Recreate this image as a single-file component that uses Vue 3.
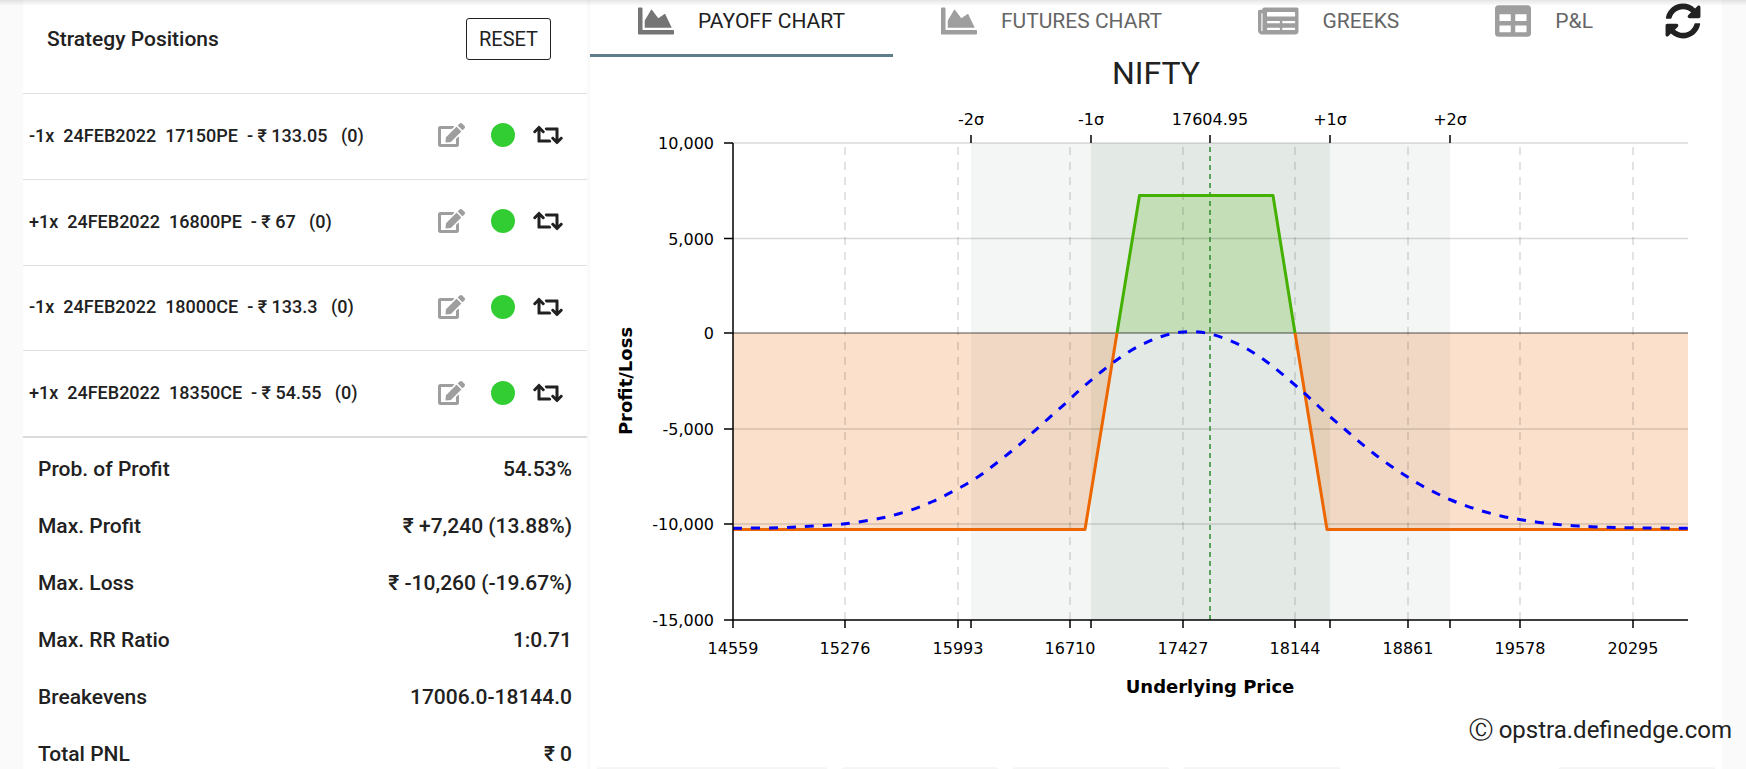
<script setup>
import { ref } from 'vue'

const positions = [
  { qty: '-1x', contract: '17150PE', price: '133.05' },
  { qty: '+1x', contract: '16800PE', price: '67' },
  { qty: '-1x', contract: '18000CE', price: '133.3' },
  { qty: '+1x', contract: '18350CE', price: '54.55' },
]

const stats = [
  ['Prob. of Profit', '54.53%'],
  ['Max. Profit', '₹ +7,240 (13.88%)'],
  ['Max. Loss', '₹ -10,260 (-19.67%)'],
  ['Max. RR Ratio', '1:0.71'],
  ['Breakevens', '17006.0-18144.0'],
  ['Total PNL', '₹ 0'],
]

const icons = {
  area: { w: 512, d: 'M500 384c6.6 0 12 5.4 12 12v40c0 6.6-5.4 12-12 12H12c-6.6 0-12-5.4-12-12V76c0-6.6 5.4-12 12-12h40c6.6 0 12 5.4 12 12v308h436zM372.7 159.5L288 216l-85.3-113.7c-5.1-6.8-15.5-6.3-19.9 1L96 248v104h384l-89.9-187.8c-3.2-6.5-11.4-8.7-17.4-4.7z' },
  news: { w: 576, d: 'M552 64H88c-13.3 0-24 10.7-24 24v8H24c-13.3 0-24 10.7-24 24v272c0 30.9 25.1 56 56 56h472c26.5 0 48-21.5 48-48V88c0-13.3-10.7-24-24-24zM56 400a8 8 0 0 1-8-8V144h16v248a8 8 0 0 1-8 8zM140 128h376q12 0 12 12v40q0 12-12 12H140q-12 0-12-12v-40q0-12 12-12zM140 256h160q12 0 12 12v8q0 12-12 12H140q-12 0-12-12v-8q0-12 12-12zM356 256h160q12 0 12 12v8q0 12-12 12H356q-12 0-12-12v-8q0-12 12-12zM140 352h160q12 0 12 12v8q0 12-12 12H140q-12 0-12-12v-8q0-12 12-12zM356 352h160q12 0 12 12v8q0 12-12 12H356q-12 0-12-12v-8q0-12 12-12z' },
  table: { w: 512, d: 'M464 32H48C21.5 32 0 53.5 0 80v352c0 26.5 21.5 48 48 48h416c26.5 0 48-21.5 48-48V80c0-26.5-21.5-48-48-48zM224 416H64v-96h160v96zm0-160H64v-96h160v96zm224 160H288v-96h160v96zm0-160H288v-96h160v96z' },
}

const tabs = [
  { label: 'PAYOFF CHART', icon: icons.area },
  { label: 'FUTURES CHART', icon: icons.area },
  { label: 'GREEKS', icon: icons.news },
  { label: 'P&L', icon: icons.table },
]
const active = ref(0)

const xTicks = [14559, 15276, 15993, 16710, 17427, 18144, 18861, 19578, 20295].map((v, i) => ({
  label: v,
  x: Math.floor(733 + i * 112.5),
}))
const yTicks = [
  { label: '10,000', y: 143 },
  { label: '5,000', y: 238.5 },
  { label: '0', y: 333 },
  { label: '-5,000', y: 429 },
  { label: '-10,000', y: 524 },
  { label: '-15,000', y: 620 },
]
const sigmas = [
  { label: '-2σ', x: 971 },
  { label: '-1σ', x: 1091 },
  { label: '17604.95', x: 1210 },
  { label: '+1σ', x: 1330 },
  { label: '+2σ', x: 1450 },
]

const curve = [
  [733, 528.3], [777.6, 527.7], [809, 526.3], [845.3, 523.7], [880, 518.3], [898, 514], [916, 508.3],
  [932.6, 501.5], [948.5, 493.7], [964.4, 485.2], [979.6, 475.8], [994, 465], [1008, 454], [1021, 443.3],
  [1032, 433.2], [1043, 423.3], [1054.8, 412.8], [1065.6, 403.2], [1076.5, 392.9], [1088, 382.8],
  [1101, 372], [1115, 361.2], [1129.8, 351.2], [1146, 342.6], [1162.4, 336.2], [1180, 332.2], [1198.5, 332],
  [1215.7, 335.4], [1233, 341.8], [1249, 350], [1264, 359.7], [1277.7, 370.3], [1291.5, 382], [1303, 392],
  [1314, 402], [1325, 412.3], [1337, 422.6], [1348, 432], [1360, 442.3], [1373.8, 453.5], [1388.3, 464.2],
  [1403.6, 474.4], [1418.6, 483.8], [1434.7, 492.4], [1451, 500], [1467.5, 506.3], [1484.7, 511.7],
  [1502, 516.2], [1519.5, 519.5], [1537.4, 522.2], [1555.4, 524.3], [1573, 525.7], [1591.6, 526.7],
  [1627, 527.7], [1688, 528.3],
]

// Catmull-Rom spline through the sampled points, emitted as cubic segments.
const curvePath = curve.reduce((path, p, i) => {
  if (i === 0) return `M${p}`
  const a = curve[i - 2] || curve[i - 1]
  const b = curve[i - 1]
  const n = curve[i + 1] || p
  const c1 = [b[0] + (p[0] - a[0]) / 6, b[1] + (p[1] - a[1]) / 6]
  const c2 = [p[0] - (n[0] - b[0]) / 6, p[1] - (n[1] - b[1]) / 6]
  return `${path}C${c1} ${c2} ${p}`
}, '')
</script>

<template>
  <div class="page">
    <section class="positions">
      <header class="head">
        <h1>Strategy Positions</h1>
        <button class="reset" type="button">RESET</button>
      </header>
      <ul class="legs">
        <li v-for="p in positions" :key="p.contract">
          <span class="leg">{{ p.qty }}&nbsp; 24FEB2022&nbsp; {{ p.contract }}&nbsp; - ₹ {{ p.price }} &nbsp;&nbsp;<span class="count">(0)</span></span>
          <button class="edit" type="button" aria-label="Edit position">
            <svg viewBox="0 0 576 512" width="27" height="24"><path d="M402.6 83.2l90.2 90.2c3.8 3.8 3.8 10 0 13.8L274.4 405.6l-92.8 10.3c-12.4 1.4-22.9-9.1-21.5-21.5l10.3-92.8L388.8 83.2c3.8-3.8 10-3.8 13.8 0zm162-22.9l-48.8-48.8c-15.2-15.2-39.9-15.2-55.2 0l-35.4 35.4c-3.8 3.8-3.8 10 0 13.8l90.2 90.2c3.8 3.8 10 3.8 13.8 0l35.4-35.4c15.2-15.3 15.2-40 0-55.2zM384 346.2V448H64V128h229.8c3.2 0 6.2-1.3 8.5-3.5l40-40c7.6-7.6 2.2-20.5-8.5-20.5H48C21.5 64 0 85.5 0 112v352c0 26.5 21.5 48 48 48h352c26.5 0 48-21.5 48-48V306.2c0-10.7-12.9-16-20.5-8.5l-40 40c-2.2 2.3-3.5 5.3-3.5 8.5z" /></svg>
          </button>
          <button class="dot" type="button" aria-label="Toggle position"></button>
          <button class="swap" type="button" aria-label="Reverse position">
            <svg viewBox="0 0 640 512" width="30" height="24"><path d="M629.657 343.598L528.971 444.284c-9.373 9.372-24.568 9.372-33.941 0L394.343 343.598c-9.373-9.373-9.373-24.569 0-33.941l10.823-10.823c9.562-9.562 25.133-9.34 34.419.492L480 342.118V160H292.451a24.005 24.005 0 0 1-16.971-7.029l-16-16C244.361 121.851 255.069 96 276.451 96H520c13.255 0 24 10.745 24 24v222.118l40.416-42.792c9.285-9.831 24.856-10.054 34.419-.492l10.823 10.823c9.372 9.372 9.372 24.569-.001 33.941zm-265.138 15.431A23.999 23.999 0 0 0 347.548 352H160V169.881l40.416 42.792c9.286 9.831 24.856 10.054 34.419.491l10.822-10.822c9.373-9.373 9.373-24.569 0-33.941L144.971 67.716c-9.373-9.373-24.569-9.373-33.941 0L10.343 168.402c-9.373 9.373-9.373 24.569 0 33.941l10.822 10.822c9.562 9.562 25.133 9.34 34.419-.491L96 169.881V392c0 13.255 10.745 24 24 24h243.549c21.382 0 32.09-25.851 16.971-40.971l-16.001-16z" /></svg>
          </button>
        </li>
      </ul>
      <dl class="stats">
        <div v-for="[k, v] in stats" :key="k"><dt>{{ k }}</dt><dd>{{ v }}</dd></div>
      </dl>
    </section>

    <main class="chart">
      <nav class="tabs">
        <button v-for="(t, i) in tabs" :key="t.label" type="button" class="tab" :class="{ active: active === i }" @click="active = i">
          <svg :viewBox="`0 0 ${t.icon.w} 512`" height="36"><path :d="t.icon.d" fill-rule="evenodd" /></svg>
          <span>{{ t.label }}</span>
        </button>
        <button class="refresh" type="button" aria-label="Refresh">
          <svg viewBox="0 0 512 512" width="36" height="36"><path d="M370.72 133.28C339.458 104.008 298.888 87.962 255.848 88c-77.458.068-144.328 53.178-162.791 126.85-1.344 5.363-6.122 9.15-11.651 9.15H24.103c-7.498 0-13.194-6.807-11.807-14.176C33.933 94.924 134.813 8 256 8c66.448 0 126.791 26.136 171.315 68.685L463.03 40.97C478.149 25.851 504 36.559 504 57.941V192c0 13.255-10.745 24-24 24H345.941c-21.382 0-32.09-25.851-16.971-40.971l41.75-41.749zM32 296h134.059c21.382 0 32.09 25.851 16.971 40.971l-41.75 41.75c31.262 29.273 71.835 45.319 114.876 45.28 77.418-.07 144.315-53.144 162.787-126.849 1.344-5.363 6.122-9.15 11.651-9.15h57.304c7.498 0 13.194 6.807 11.807 14.176C478.067 417.076 377.187 504 256 504c-66.448 0-126.791-26.136-171.315-68.685L48.97 471.03C33.851 486.149 8 475.441 8 454.059V320c0-13.255 10.745-24 24-24z" /></svg>
        </button>
      </nav>
      <h2>NIFTY</h2>
      <svg class="plot" viewBox="590 93 1132 614" role="img" aria-label="NIFTY payoff chart">
        <rect x="971" y="143" width="479" height="477" fill="#f3f6f5" />
        <rect x="1091" y="143" width="239" height="477" fill="#e3eae6" />
        <path class="loss-area" d="M733 333H1117L1085 529H733zM1295 333H1688V529H1327z" />
        <path class="gain-area" d="M1117 333L1139.500 195.500H1273L1295 333z" />
        <g class="grid">
          <line v-for="t in yTicks.slice(0, 5)" :key="t.y" x1="733" x2="1688" :y1="t.y" :y2="t.y" :class="{ zero: t.label === '0' }" />
          <line v-for="t in xTicks.slice(1)" :key="t.x" :x1="t.x" :x2="t.x" y1="620" y2="143" stroke-dasharray="8 7" />
        </g>
        <line class="spot" x1="1210" x2="1210" y1="620" y2="143" />
        <path class="line loss" d="M733 529.500H1085L1117 333M1295 333L1327 529.500H1688" />
        <path class="line gain" d="M1117 333L1139.500 195.500H1273L1295 333" />
        <path class="today" :d="curvePath" />
        <g class="axis">
          <path d="M733 143V620H1688" />
          <line v-for="t in yTicks" :key="t.y" x1="724" x2="733" :y1="t.y" :y2="t.y" />
          <line v-for="t in xTicks" :key="t.x" :x1="t.x" :x2="t.x" y1="620" y2="628" />
          <template v-for="s in sigmas" :key="s.x">
            <line :x1="s.x" :x2="s.x" y1="135" y2="143" />
            <line v-if="s.x !== 1210" :x1="s.x" :x2="s.x" y1="620" y2="628" />
          </template>
        </g>
        <g class="labels">
          <text v-for="t in yTicks" :key="t.label" x="714" :y="t.y + 6" text-anchor="end">{{ t.label }}</text>
          <text v-for="t in xTicks" :key="t.label" :x="t.x" y="654" text-anchor="middle">{{ t.label }}</text>
          <text v-for="s in sigmas" :key="s.label" :x="s.x" y="125" text-anchor="middle">{{ s.label }}</text>
          <text class="title" x="1210" y="693" text-anchor="middle">Underlying Price</text>
          <text class="title" transform="translate(632 381) rotate(-90)" text-anchor="middle">Profit/Loss</text>
        </g>
      </svg>
      <div class="cards"><i class="wide"></i><i></i><i></i><i></i><i class="last"></i></div>
    </main>

    <div class="credit"><span class="mark">Ⓒ</span> opstra.definedge.com</div>
    <div class="shade"></div>
  </div>
</template>

<style>
body {
  margin: 0;
  background: #fafafa;
}
</style>

<style scoped>
.page {
  position: relative;
  display: grid;
  grid-template-columns: minmax(0, 564fr) minmax(0, 1132fr);
  gap: 3px;
  height: 100vh;
  padding: 0 24px 0 23px;
  box-sizing: border-box;
  overflow: hidden;
  background: #fafafa;
  color: #212121;
  font-family: Roboto, "Noto Sans", sans-serif;
}
button {
  margin: 0;
  padding: 0;
  border: 0;
  background: none;
  color: inherit;
  font: inherit;
  cursor: pointer;
}
svg {
  display: block;
  fill: currentColor;
}
h1, h2, ul, dl, dd {
  margin: 0;
  padding: 0;
}
.positions, .chart {
  background: #fff;
}
.head {
  display: flex;
  align-items: center;
  justify-content: space-between;
  padding: 18px 36px 33px 24px;
}
h1 {
  font-size: 21px;
  font-weight: 500;
  line-height: 24px;
}
.reset {
  height: 42px;
  padding: 0 12px;
  border: 1px solid #212121;
  border-radius: 3px;
  font-size: 20px;
}
.legs {
  display: grid;
  grid-auto-rows: 1fr;
  height: 343px;
  list-style: none;
  border-bottom: 2px solid #dcdcdc;
}
.legs li {
  display: flex;
  align-items: center;
  padding: 0 24px 2px 6px;
  border-top: 1px solid #e0e0e0;
}
.leg {
  flex: 1;
  font-size: 18px;
  font-weight: 500;
  white-space: pre;
}
.edit {
  color: #9e9e9e;
}
.dot {
  width: 24px;
  height: 24px;
  margin: 0 18px 0 26px;
  border-radius: 50%;
  background: #32cd32;
}
.stats {
  padding-top: 2px;
}
.stats div {
  display: flex;
  align-items: center;
  justify-content: space-between;
  height: 57px;
  padding: 0 15px;
  font-size: 21px;
  font-weight: 500;
}
.tabs {
  display: flex;
  align-items: flex-start;
}
.tab {
  display: flex;
  align-items: center;
  gap: 24px;
  padding: 3px 48px 15px;
  border-bottom: 3px solid transparent;
  color: #666;
  font-size: 21px;
  white-space: nowrap;
}
.tab svg {
  color: #9e9e9e;
}
.tab.active {
  border-color: #607d8b;
  color: #212121;
}
.tab.active svg {
  color: #757575;
}
.refresh {
  margin: 3px 21px 0 auto;
}
h2 {
  padding-bottom: 4px;
  font-size: 32px;
  font-weight: 400;
  line-height: 32px;
  text-align: center;
}
.plot {
  width: 100%;
}
.loss-area {
  fill: rgba(236, 102, 0, 0.2);
}
.gain-area {
  fill: rgba(75, 180, 0, 0.2);
}
.grid line {
  stroke: #000;
  stroke-opacity: 0.15;
  stroke-width: 1.5;
}
.grid .zero {
  stroke-opacity: 0.45;
}
.spot {
  stroke: #2e8b2e;
  stroke-width: 1.5;
  stroke-dasharray: 5 4;
}
.line {
  fill: none;
  stroke-width: 3;
  stroke-linejoin: round;
}
.loss {
  stroke: #ed6600;
}
.gain {
  stroke: #44b000;
}
.today {
  fill: none;
  stroke: #00f;
  stroke-width: 3;
  stroke-dasharray: 9 9;
}
.axis {
  fill: none;
  stroke: #000;
  stroke-width: 1.5;
}
.labels {
  fill: #000;
  font-family: "DejaVu Sans", sans-serif;
  font-size: 16px;
}
.labels .title {
  font-size: 18px;
  font-weight: 700;
}
.cards {
  display: flex;
  gap: 13px;
  padding: 60px 6px 0;
}
.cards i {
  flex: 0 0 158px;
  height: 36px;
  border-radius: 4px;
  background: #f5f5f5;
}
.cards .wide {
  flex-basis: 232px;
}
.cards .last {
  margin-left: auto;
}
.credit {
  position: absolute;
  right: 14px;
  bottom: 24px;
  display: flex;
  align-items: center;
  gap: 6px;
  font-size: 24px;
  line-height: 30px;
}
.mark {
  font-family: "DejaVu Sans", sans-serif;
}
.shade {
  position: absolute;
  inset: 0 0 auto;
  height: 6px;
  background: linear-gradient(rgba(0, 0, 0, 0.1), rgba(0, 0, 0, 0));
}
</style>
